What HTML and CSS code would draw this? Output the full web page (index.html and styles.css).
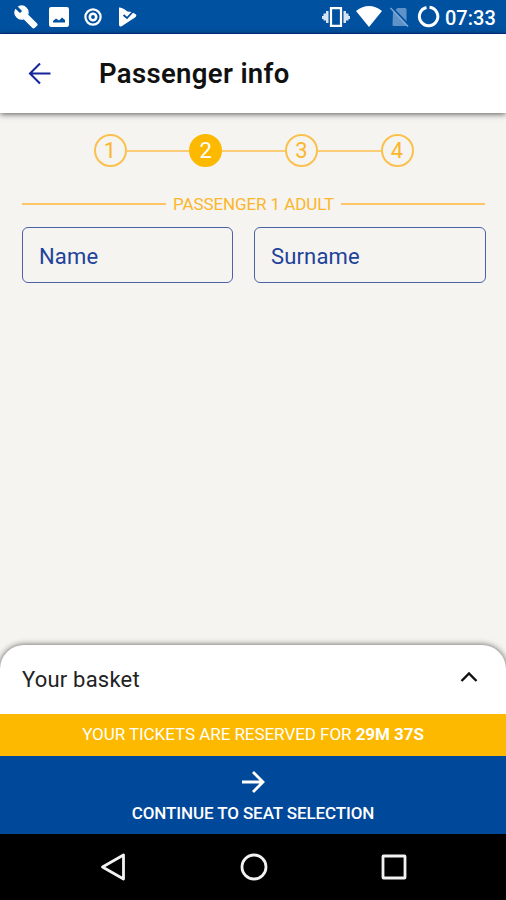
FILE: index.html
```html
<!DOCTYPE html>
<html lang="en">
<head>
<meta charset="utf-8">
<title>Passenger info</title>
<link rel="stylesheet" href="styles.css">
</head>
<body>
<div class="screen">
  <div class="status">
    <svg class="wrench" width="24" height="24" viewBox="0 0 24 24"><path fill="#fff" stroke="#fff" stroke-width="1.200" d="M22.7 19l-9.1-9.1c.9-2.3.4-5-1.5-6.9-2-2-5-2.4-7.4-1.3L9 6 6 9 1.6 4.7C.4 7.1.9 10.1 2.9 12.1c1.9 1.9 4.6 2.4 6.9 1.5l9.1 9.1c.4.4 1 .4 1.4 0l2.3-2.3c.5-.4.5-1.1.1-1.4z"/></svg>
    <svg class="photo" width="20" height="20" viewBox="0 0 20 20"><path fill="#fff" fill-rule="evenodd" d="M2.200 0H17.800Q20 0 20 2.200V17.800Q20 20 17.800 20H2.200Q0 20 0 17.800V2.200Q0 0 2.200 0ZM4 15.500H16V13L13 10.500L10 13.500L7 11.500L4 14Z"/></svg>
    <svg class="target" width="18" height="18" viewBox="0 0 18 18"><circle cx="9" cy="9" r="7.600" fill="none" stroke="#fff" stroke-width="2.200"/><circle cx="9" cy="9" r="3.200" fill="none" stroke="#fff" stroke-width="2.600"/></svg>
    <svg class="play" width="19" height="20" viewBox="0 0 19 20"><path fill="#fff" d="M1 .5Q3 0 6 2L9.500 4.500L14 5L18 7.500Q19 9 17 10.500L4 19Q1 20.500 1 17.500Z"/><path fill="none" stroke="#0051a0" stroke-width="1.800" d="M5.500 8L9 11L15.500 4"/></svg>
    <svg class="vibrate" width="28" height="20" viewBox="0 0 28 20"><path fill="none" stroke="#fff" stroke-width="2.200" d="M9 1.100H19V18.900H9Z"/><path fill="#d7e4f2" d="M4 4H6.500V16H4ZM21.500 4H24V16H21.500ZM1.500 6.500H4V13.500H1.500ZM24 6.500H26.500V13.500H24ZM0 9H1.500V12H0ZM26.500 9H28V12H26.500Z"/></svg>
    <svg class="wifi" width="26" height="21" viewBox="0 0 26 21"><path fill="#fff" d="M0 5Q13-5 26 5L13 21Z"/></svg>
    <svg class="sim" width="19" height="20" viewBox="0 0 19 20"><path fill="#5f93c7" d="M3 5.500L7.500 1H15Q16.500 1 16.500 2.500V19H4Q2.500 19 2.500 17.500Z"/><path stroke="#0051a0" stroke-width="1.800" d="M2 .5L19 18"/><path stroke="#80a9d3" stroke-width="1.500" d="M.5 1L18 19.500"/></svg>
    <svg class="sync" width="23" height="23" viewBox="0 0 23 23"><path fill="none" stroke="#fff" stroke-width="3" d="M12.500 2.300A9.200 9.200 0 1 1 9.500 2.500"/></svg>
    <span class="clock">07:33</span>
  </div>
  <header class="appbar">
    <svg width="24" height="24" viewBox="0 0 24 24"><path fill="none" stroke="#15259b" stroke-width="2.100" d="M23.500 11.500H3M13 1.500L3 11.500L13 21.500"/></svg>
    <h1>Passenger info</h1>
  </header>
  <main>
    <div class="steps">
      <span class="step">1</span><i></i><span class="step current">2</span><i></i><span class="step">3</span><i></i><span class="step">4</span>
    </div>
    <div class="divider"><i></i><span>PASSENGER 1 ADULT</span><i></i></div>
    <div class="fields"><div class="field">Name</div><div class="field">Surname</div></div>
  </main>
  <section class="basket"><span>Your basket</span>
    <svg width="18" height="12" viewBox="0 0 18 12"><path fill="none" stroke="#111" stroke-width="2.400" d="M1.500 10L9 2.500L16.500 10"/></svg>
  </section>
  <div class="timer"><span>YOUR TICKETS ARE RESERVED FOR <b>29M 37S</b></span></div>
  <div class="continue">
    <svg width="24" height="24" viewBox="0 0 24 24"><path fill="none" stroke="#fff" stroke-width="2.800" d="M1 12H22M12 2L22 12L12 22"/></svg>
    <span>CONTINUE TO SEAT SELECTION</span>
  </div>
  <nav class="nav">
    <svg width="26" height="28" viewBox="0 0 26 28"><path fill="none" stroke="#f2f2f2" stroke-width="2.800" stroke-linejoin="round" d="M23.500 2V26L2.500 14Z"/></svg>
    <svg width="28" height="28" viewBox="0 0 28 28"><circle cx="14" cy="14" r="12" fill="none" stroke="#f2f2f2" stroke-width="2.800"/></svg>
    <svg width="26" height="26" viewBox="0 0 26 26"><rect x="2" y="2" width="22" height="22" rx=".5" fill="none" stroke="#f2f2f2" stroke-width="2.800"/></svg>
  </nav>
</div>
</body>
</html>
```
FILE: styles.css
```css
* { box-sizing: border-box; }
body { margin: 0; font-family: Roboto, sans-serif; }
svg { display: block; flex: none; }
.screen { width: 506px; height: 900px; display: flex; flex-direction: column; background: #f5f4f0; overflow: hidden; }
.status { height: 34px; flex: none; display: flex; align-items: center; padding-left: 14px; background: #0051a0; border-bottom: 1px solid #0a2f94; color: #fff; }
.photo { margin-left: 11px; }
.target { margin-left: 15px; }
.play { margin-left: 16px; }
.vibrate { margin-left: 185px; }
.wifi { margin-left: 6px; }
.sim { margin-left: 8px; }
.sync { margin-left: 8px; }
.clock { margin-left: 5px; font-size: 20px; font-weight: 500; line-height: 34px; padding-top: 2px; white-space: nowrap; }
.appbar { height: 79px; flex: none; display: flex; align-items: center; padding-left: 27px; background: #fff; box-shadow: 0 1px 6px rgba(0,0,0,.65); }
h1 { margin: 0 0 0 48px; font-size: 27.500px; font-weight: 600; line-height: 36px; letter-spacing: .35px; color: #111; white-space: nowrap; }
main { flex: 1; padding: 21px 21px 0 22px; }
.steps { display: flex; align-items: center; width: 320px; margin-left: 71.500px; }
.steps i { flex: 1; height: 2px; background: #fbcc76; }
.step { width: 33px; height: 33px; flex: none; border: 2px solid #fbc14f; border-radius: 50%; display: flex; align-items: center; justify-content: center; color: #fbb62c; font-size: 22px; line-height: 30px; }
.current { background: #fcb900; border-color: #fcb900; color: #fff; }
.divider { display: flex; align-items: center; gap: 7px; height: 24px; margin-top: 25px; color: #fbb62c; font-size: 17px; letter-spacing: -.1px; white-space: nowrap; }
.divider i { flex: 1; height: 2px; background: #fbc568; }
.fields { display: grid; grid-template-columns: 211px 232px; column-gap: 21px; margin-top: 11px; }
.field { height: 56px; border: 1.500px solid #4b62a7; border-radius: 6px; padding-left: 16px; font-size: 22px; letter-spacing: .15px; line-height: 57px; color: #21429a; }
.basket { height: 69px; flex: none; display: flex; align-items: center; justify-content: space-between; padding: 0 28px 0 22px; background: #fff; border-radius: 24px 24px 0 0; box-shadow: 0 0 6px rgba(0,0,0,.65); font-size: 22px; letter-spacing: .2px; color: #222; }
.basket svg { margin-bottom: 5px; }
.timer { height: 42px; flex: none; position: relative; background: #fcb900; color: #fff; font-size: 17px; letter-spacing: -.05px; line-height: 41px; text-align: center; white-space: nowrap; }
.continue { height: 78px; flex: none; display: flex; flex-direction: column; align-items: center; padding-top: 14px; background: #004899; color: #fff; font-size: 17px; font-weight: 500; letter-spacing: -.1px; line-height: 24px; position: relative; white-space: nowrap; }
.continue span { margin-top: 7px; }
.nav { height: 66px; flex: none; display: flex; align-items: center; padding-left: 100px; background: #000; position: relative; }
.nav svg + svg { margin-left: 113.500px; }
```
